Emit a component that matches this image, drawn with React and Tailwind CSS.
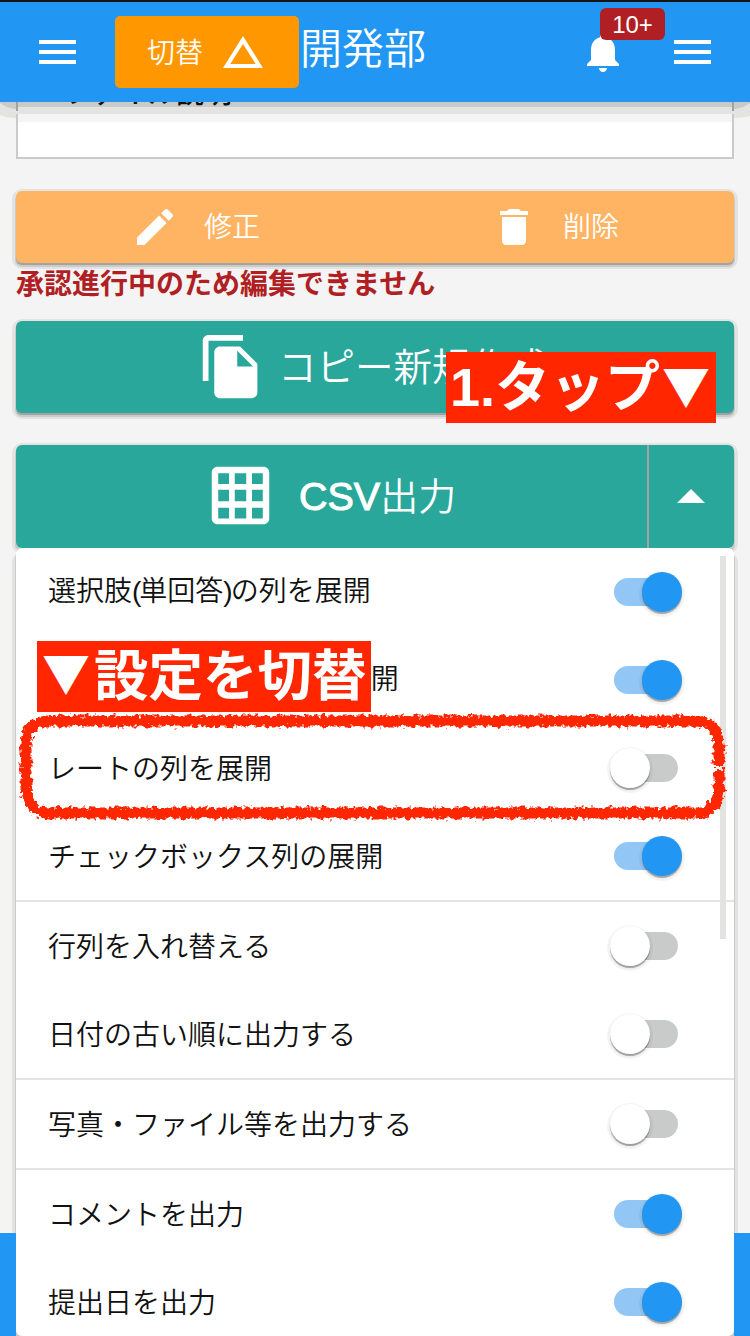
import React from "react";

const RAISED =
  "shadow-[0_2px_0_0_#a1a3a2,0_3px_0_1px_#c9cbca,0_2px_0_4px_#e3e3e2]";

function MenuIcon() {
  return (
    <svg viewBox="0 0 37 24" className="h-6 w-[37px] shrink-0 fill-white">
      <path d="M0 0h37v4H0zM0 10h37v4H0zM0 20h37v4H0z" />
    </svg>
  );
}

function Header() {
  return (
    <header className="relative z-20 flex h-[102px] shrink-0 items-start border-t-2 border-[#141414] bg-[#2196f3] pl-[39px] pr-[39px] text-white">
      <div className="pt-[38px]">
        <MenuIcon />
      </div>
      <button className="ml-[39px] mt-[14px] flex h-[72px] w-[184px] shrink-0 items-center rounded-[5px] bg-[#ff9800] pl-8 text-[28px] font-[350] leading-none">
        <span className="-mt-0.5 w-14">切替</span>
        <svg viewBox="0 0 40 32" className="ml-5 mt-[-1px] h-8 w-10 shrink-0 fill-white">
          <path fillRule="evenodd" d="M20 0L40 32H0zM20 8L7.3 28H32.7z" />
        </svg>
      </button>
      <h1 className="mt-[22px] whitespace-nowrap pl-[1px] text-[42px] font-[350] leading-[44px]">開発部</h1>
      <div className="relative ml-auto mr-[47px] pt-[26px]">
        <svg viewBox="0 0 24 24" className="h-12 w-12 fill-white">
          <path d="M12 22c1.1 0 2-.9 2-2h-4c0 1.1.89 2 2 2zm6-6v-5c0-3.07-1.64-5.64-4.5-6.32V4c0-.83-.67-1.5-1.5-1.5s-1.5.67-1.5 1.5v.68C7.63 5.36 6 7.92 6 11v5l-2 2v1h16v-1l-2-2z" />
        </svg>
        <span className="absolute left-[21px] top-[6px] flex h-8 w-[65px] items-center justify-center rounded-[6px] bg-[#b01f24] pt-px font-['Liberation_Sans',sans-serif] text-[24px] leading-none">
          10+
        </span>
      </div>
      <div className="pt-[38px]">
        <MenuIcon />
      </div>
    </header>
  );
}

function HeaderShadow() {
  return (
    <svg viewBox="0 0 750 20" className="pointer-events-none absolute left-0 top-[102px] z-0 h-5 w-[750px]">
      <path d="M18 0H732V20H18z" fill="#f4f4f4" />
      <path d="M0 0H750V14Q743 16 734 16V12H16V16Q6 16 0 13z" fill="#e3e3e2" />
      <path d="M0 0H750V1Q744 6 734 7V5H16V7Q6 6 0 1z" fill="#c9cbca" />
      <path d="M16 0h2v9h-2zM732 0h2v9h-2z" fill="#a1a3a2" />
    </svg>
  );
}

function Toggle({ on }) {
  return (
    <span className="flex h-10 w-[76px] shrink-0 items-center">
      {on ? (
        <span className="ml-[6px] flex h-7 w-[68px] items-center justify-end rounded-full bg-gradient-to-r from-[#92c6f4] from-[56px] to-transparent to-[56px]">
          <span className="size-10 rounded-full bg-[#2196f3] shadow-[0_2px_1px_rgba(0,0,0,0.32),0_2px_0_3px_rgba(0,0,0,0.045)]" />
        </span>
      ) : (
        <span className="ml-[2px] flex h-7 w-[68px] items-center rounded-full bg-gradient-to-r from-transparent from-[16px] to-[#c9cbca] to-[16px]">
          <span className="size-10 rounded-full bg-white shadow-[0_2px_1px_rgba(0,0,0,0.36),0_2px_0_3px_rgba(0,0,0,0.045)]" />
        </span>
      )}
    </span>
  );
}

function Paren({ children }) {
  return <span className="font-['Liberation_Sans',sans-serif] tracking-[-2px]">{children}</span>;
}

const GROUPS = [
  [
    [<>選択肢<Paren>(</Paren>単回答<Paren>)</Paren>の列を展開</>, true],
    [<>選択肢<Paren>(</Paren>複数回答<Paren>)</Paren>の列を展開</>, true],
    ["レートの列を展開", false],
    ["チェックボックス列の展開", true],
  ],
  [
    ["行列を入れ替える", false],
    ["日付の古い順に出力する", false],
  ],
  [["写真・ファイル等を出力する", false]],
  [
    ["コメントを出力", true],
    ["提出日を出力", true],
  ],
];

function OptionsMenu() {
  return (
    <div className="relative h-[788px] shrink-0 rounded-[6px] bg-white shadow-[0_5px_0_1px_#c9cbca,0_8px_0_4px_#e3e3e2]">
      {GROUPS.map((rows, i) => (
        <div key={i} className={i ? "border-t-2 border-[#e3e3e3]" : ""}>
          {rows.map(([label, on], j) => (
            <div key={j} className="flex h-[88px] items-center justify-between pl-8 pr-[50px] text-[28px] font-[350] text-[#111]">
              <span className="-mt-[3px] whitespace-nowrap leading-[42px]">{label}</span>
              <Toggle on={on} />
            </div>
          ))}
        </div>
      ))}
      <span className="absolute right-2 top-2 h-[383px] w-[6px] bg-[#e3e3e2]" />
    </div>
  );
}

function RoughFrame() {
  return (
    <svg viewBox="0 0 720 116" className="absolute left-[14px] top-[709px] z-20 h-[116px] w-[720px] overflow-visible">
      <filter id="crayon" x="-2%" y="-10%" width="104%" height="120%">
        <feTurbulence type="fractalNoise" baseFrequency="0.25" numOctaves="3" seed="4" result="n" />
        <feDisplacementMap in="SourceGraphic" in2="n" scale="9" xChannelSelector="R" yChannelSelector="G" />
      </filter>
      <path
        filter="url(#crayon)"
        d="M705 57V36Q704 12 680 12H36Q12 12 12 36V78Q12 104 36 104H680Q704 104 705 80V60"
        fill="none"
        stroke="#ff2600"
        strokeWidth="11"
      />
    </svg>
  );
}

export default function App() {
  return (
    <div className="relative flex h-[1336px] w-[750px] flex-col overflow-hidden bg-[#f4f4f4] font-['Noto_Sans_CJK_JP',sans-serif]">
      <Header />
      <main className="flex flex-1 flex-col px-4">
        <div className="-mt-4 flex h-[73px] shrink-0 flex-col border-2 border-t-0 border-[#c9cbca] bg-white pl-[46px] text-[28px] font-medium leading-none text-[#111]">
          <span className="relative z-10 -mt-[9px] h-6 overflow-visible">ファイル説明</span>
        </div>
        <div className={`mt-8 flex h-[72px] shrink-0 items-center rounded-[6px] bg-[#ffb463] text-[28px] font-[350] text-white ${RAISED}`}>
          <div className="flex w-1/2 items-center pl-[115px]">
            <svg viewBox="0 0 24 24" className="h-12 w-12 fill-white">
              <path d="M3 17.250V21h3.750L17.810 9.940l-3.750-3.750L3 17.250zM20.710 7.040c.390-.390.390-1.020 0-1.410l-2.340-2.340c-.390-.390-1.020-.390-1.410 0l-1.830 1.830 3.750 3.750 1.830-1.830z" />
            </svg>
            <span className="-mt-[5px] ml-[25px]">修正</span>
          </div>
          <div className="flex w-1/2 items-center pl-[115px]">
            <svg viewBox="0 0 24 24" className="h-12 w-12 fill-white">
              <path d="M6 19c0 1.100.9 2 2 2h8c1.100 0 2-.9 2-2V7H6v12zM19 4h-3.500l-1-1h-5l-1 1H5v2h14V4z" />
            </svg>
            <span className="-mt-[5px] ml-[25px]">削除</span>
          </div>
        </div>
        <p className="mt-[4px] h-[30px] shrink-0 whitespace-nowrap text-[28px] font-bold leading-[30px] text-[#b01f24]">
          承認進行中のため編集できません
        </p>
        <div className={`mt-[24px] flex h-[92px] shrink-0 items-center rounded-[6px] bg-[#28a79a] pl-[181px] text-[38.5px] font-[350] text-white ${RAISED}`}>
          <svg viewBox="0 0 24 24" className="-mt-[2px] h-[69px] w-[69px] shrink-0 fill-white">
            <path d="M16 1H4c-1.100 0-2 .9-2 2v14h2V3h12V1zm-1 4l6 6v10c0 1.100-.9 2-2 2H7.990C6.890 23 6 22.100 6 21l.010-14c0-1.100.890-2 1.990-2h7zm-1 7h5.500L14 6.500V12z" />
          </svg>
          <span className="-mt-[5px] ml-[12px] whitespace-nowrap">コピー新規作成</span>
        </div>
        <div className="mt-8 flex h-[103px] shrink-0 rounded-[6px] bg-[#28a79a] text-white shadow-[0_3px_0_1px_#c9cbca,0_2px_0_4px_#e3e3e2]">
          <div className="flex w-[631px] items-center pl-[190px] text-[38px]">
            <svg viewBox="0 0 24 24" className="-mt-[2px] h-[69px] w-[69px] shrink-0 fill-white">
              <path d="M20 2H4c-1.100 0-2 .9-2 2v16c0 1.100.9 2 2 2h16c1.100 0 2-.9 2-2V4c0-1.100-.9-2-2-2zM8 20H4.250v-3.750H8V20zm0-6H4.250v-4H8v4zm0-6H4.250V4.250H8V8zm6 12h-4v-3.750h4V20zm0-6h-4v-4h4v4zm0-6h-4V4.250h4V8zm5.750 12H16v-3.750h3.750V20zm0-6H16v-4h3.750v4zm0-6H16V4.250h3.750V8z" />
            </svg>
            <span className="-mt-[2px] ml-[24px] whitespace-nowrap font-[350]">
              <span className="font-['Liberation_Sans',sans-serif] text-[39.5px] font-normal [-webkit-text-stroke:1px_white]">CSV</span>出力
            </span>
          </div>
          <div className="flex flex-1 items-center justify-center border-l-2 border-[#a1a3a2] pr-[1px]">
            <svg viewBox="0 0 28 14" className="-mt-[1px] h-[14px] w-7 fill-white">
              <path d="M14 0L28 14H0z" />
            </svg>
          </div>
        </div>
        <OptionsMenu />
      </main>
      <HeaderShadow />
      <div className="absolute bottom-0 left-0 h-[103px] w-4 bg-[#2196f3]" />
      <div className="absolute bottom-0 right-0 h-[103px] w-4 bg-[#2196f3]" />
      <div className="absolute left-[446px] top-[352px] z-20 flex h-[71px] w-[270px] items-center whitespace-nowrap bg-[#ff2600] pb-[8px] pl-[4px] text-[55px] font-bold leading-none text-white">
        <span className="pt-[6px] font-['Liberation_Sans',sans-serif] text-[54px]">1.</span>
        <span className="-mt-[2px] w-[167px]">タップ</span>
        <span className="text-[48px]">▼</span>
      </div>
      <div className="absolute left-[37px] top-[641px] z-20 flex h-[71px] w-[334px] items-center whitespace-nowrap bg-[#ff2600] pb-[8px] pl-[5px] text-[54.5px] font-bold leading-none text-white">
        <span className="w-[52px] pb-[4px] text-[48px]">▼</span>
        <span>設定を切替</span>
      </div>
      <RoughFrame />
    </div>
  );
}
